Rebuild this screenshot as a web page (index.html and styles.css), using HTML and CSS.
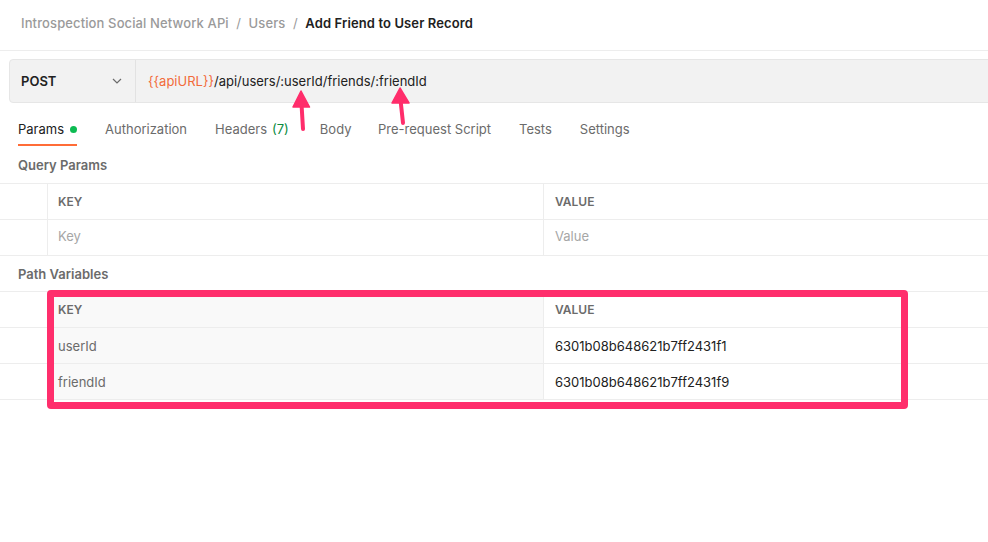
FILE: index.html
```html
<!DOCTYPE html>
<html>
<head>
<meta charset="utf-8">
<link rel="stylesheet" href="styles.css">
</head>
<body>
<div class="page">
  <header class="crumbs">
    <span class="crumb">Introspection Social Network APi</span>
    <span class="sep">/</span>
    <span class="crumb">Users</span>
    <span class="sep">/</span>
    <span class="crumb current">Add Friend to User Record</span>
  </header>

  <div class="urlbar">
    <div class="method">
      <span class="method-name">POST</span>
      <svg class="chev" width="10" height="6" viewBox="0 0 10 6"><path d="M1 1 L5 5 L9 1" fill="none" stroke="#6b6b6b" stroke-width="1.2"/></svg>
    </div>
    <div class="url"><span class="var">{{apiURL}}</span>/api/users/:userId/friends/:friendId</div>
  </div>

  <nav class="tabs">
    <div class="tab active">Params <span class="dot"></span></div>
    <div class="tab">Authorization</div>
    <div class="tab headers">Headers <span class="count">(7)</span></div>
    <div class="tab body">Body</div>
    <div class="tab">Pre-request Script</div>
    <div class="tab">Tests</div>
    <div class="tab">Settings</div>
  </nav>

  <div class="section-title">Query Params</div>
  <div class="table">
    <div class="row head">
      <div class="cell chk"></div>
      <div class="cell key">KEY</div>
      <div class="cell val">VALUE</div>
    </div>
    <div class="row">
      <div class="cell chk"></div>
      <div class="cell key ph">Key</div>
      <div class="cell val ph">Value</div>
    </div>
  </div>

  <div class="section-title">Path Variables</div>
  <div class="table path">
    <div class="row head">
      <div class="cell chk"></div>
      <div class="cell key grey">KEY</div>
      <div class="cell val">VALUE</div>
    </div>
    <div class="row">
      <div class="cell chk"></div>
      <div class="cell key grey name">userId</div>
      <div class="cell val data">6301b08b648621b7ff2431f1</div>
    </div>
    <div class="row">
      <div class="cell chk"></div>
      <div class="cell key grey name">friendId</div>
      <div class="cell val data">6301b08b648621b7ff2431f9</div>
    </div>
    <div class="highlight"></div>
  </div>

  <svg class="arrows" width="988" height="542" viewBox="0 0 988 542">
    <g fill="#ff2d6b" stroke="#ff2d6b" stroke-linecap="round" stroke-linejoin="round">
      <line x1="301.5" y1="104" x2="303" y2="129" stroke-width="4"/>
      <polygon points="301,91 309.5,107 293,107" stroke-width="1.5"/>
      <line x1="400.5" y1="100" x2="403" y2="123" stroke-width="4"/>
      <polygon points="400,88 409,103 392,103" stroke-width="1.5"/>
    </g>
  </svg>
</div>
</body>
</html>
```

FILE: styles.css
```css
* { box-sizing: border-box; }
html, body { margin: 0; padding: 0; background: #fff; }
body {
  font-family: Inter, "Noto Sans", "Liberation Sans", sans-serif;
  font-size: 13px;
  color: #212121;
  width: 988px;
  height: 542px;
  overflow: hidden;
}
.page { position: relative; height: 542px; }

.crumbs {
  height: 51px;
  border-bottom: 1px solid #ededed;
  padding: 15px 0 0 21px;
  line-height: 16px;
  display: flex;
  gap: 7.5px;
  letter-spacing: 0.12px;
}
.crumb { color: #9a9a9a; font-weight: 500; }
.sep { color: #9a9a9a; }
.crumb.current { color: #212121; font-weight: 600; }

.urlbar {
  margin: 8px -10px 0 9px;
  height: 44px;
  background: #f2f2f2;
  border: 1px solid #e6e6e6;
  border-radius: 4px;
  display: flex;
  align-items: stretch;
}
.method {
  width: 126px;
  border-right: 1px solid #e2e2e2;
  display: flex;
  align-items: center;
  justify-content: space-between;
  padding: 0 13px 0 11px;
}
.method-name { font-weight: 600; color: #212121; }
.url {
  display: flex;
  align-items: center;
  padding-left: 12px;
  color: #212121;
}
.var { color: #f26b3a; }

.tabs {
  display: flex;
  padding-left: 18px;
  margin: 6px 0 1px;
  gap: 28px;
}
.tab {
  padding: 12px 0 7px;
  line-height: 16px;
  color: #6b6b6b;
  border-bottom: 2px solid transparent;
  display: flex;
  align-items: center;
  gap: 6px;
}
.tab.active { color: #212121; border-bottom-color: #ff6c37; }
.tab.headers { margin-right: 3px; }
.tab.body { margin-right: -1.5px; }
.dot { width: 7px; height: 7px; border-radius: 50%; background: #0cbb52; display: inline-block; }
.count { color: #0a8b3e; margin-left: -1px; }

.section-title {
  padding: 10px 0 0 18px;
  height: 36px;
  line-height: 16px;
  font-weight: 600;
  color: #6b6b6b;
}
.table + .section-title { height: 35px; }

.table { position: relative; border-top: 1px solid #ededed; }
.row { display: flex; height: 36px; border-bottom: 1px solid #ededed; }
.cell {
  display: flex;
  align-items: center;
  line-height: 16px;
}
.chk { width: 48px; border-right: 1px solid #ededed; }
.key { width: 496px; padding-left: 10px; border-right: 1px solid #ededed; }
.val { flex: 1; padding-left: 11px; }
.head .cell.key, .head .cell.val { font-size: 12px; font-weight: 600; color: #6b6b6b; }
.ph { color: #a6a6a6; padding-bottom: 3px; }
.grey { background: #f9f9f9; }
.name { color: #6b6b6b; }
.data { color: #212121; }

.highlight {
  position: absolute;
  left: 47px;
  top: -2px;
  width: 861px;
  height: 119px;
  border: 7px solid #ff2e6c;
  border-radius: 4px;
}

.arrows { position: absolute; left: 0; top: 0; pointer-events: none; }
```
